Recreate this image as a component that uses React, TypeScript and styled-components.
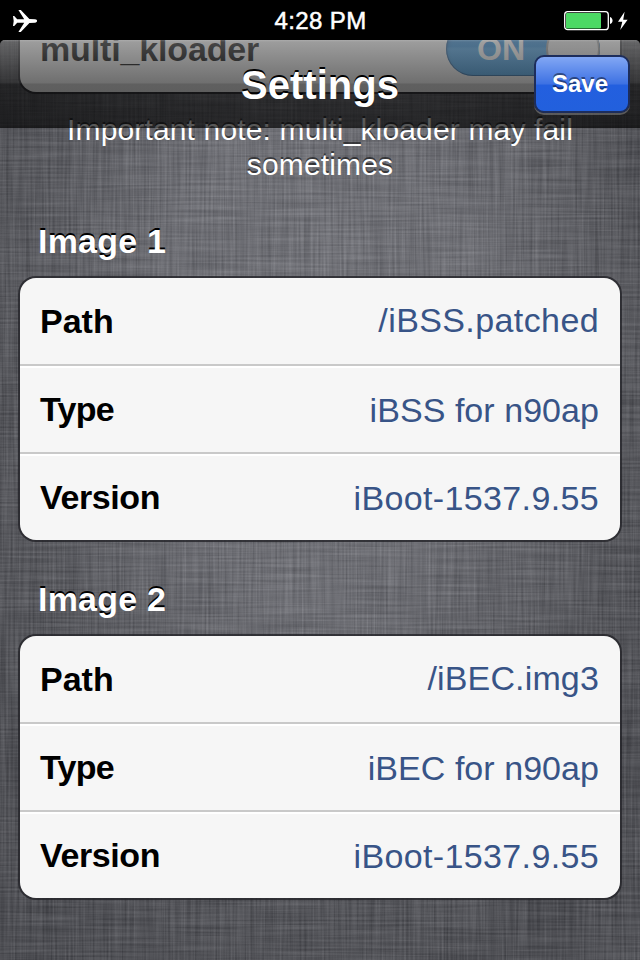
import React from "react";
import styled, { createGlobalStyle } from "styled-components";

const GlobalStyle = createGlobalStyle`
  * { box-sizing: border-box; }
  body {
    margin: 0;
    background: #000;
    font-family: "Liberation Sans", Arial, sans-serif;
  }
`;

const Screen = styled.main`
  width: 640px;
  height: 960px;
  overflow: hidden;
  background: #000;
  display: flex;
  flex-direction: column;
`;

const StatusBar = styled.header`
  height: 40px;
  flex: none;
  display: grid;
  grid-template-columns: 1fr auto 1fr;
  align-items: center;
  padding: 1px 11px 0 12px;
  color: #fff;
`;

const Clock = styled.time`
  font-size: 24px;
  line-height: 28px;
  letter-spacing: 0.4px;
  -webkit-text-stroke: 0.5px #fff;
`;

const StatusRight = styled.div`
  display: flex;
  align-items: center;
  justify-content: flex-end;
`;

const Viewport = styled.div`
  position: relative;
  flex: 1;
  overflow: hidden;
  border-radius: 5px 5px 0 0;
  background:
    radial-gradient(ellipse 400px 680px at 50% 32%, #74757b 0%, #6d6e74 40%, #515257 80%, #494a4f 100%);
`;

const Linen = styled.svg`
  position: absolute;
  inset: 0;
  width: 100%;
  height: 100%;
`;

const NavBar = styled.nav`
  position: absolute;
  inset: 0 0 auto 0;
  height: 88px;
  display: grid;
  grid-template-columns: 1fr auto 1fr;
  align-items: center;
  padding: 0 10px;
  background: linear-gradient(
    rgba(140, 140, 140, 0.7) 0,
    rgba(108, 108, 108, 0.65) 2px,
    rgba(32, 32, 32, 0.63) 43px,
    rgba(8, 8, 8, 0.63) 44px,
    rgba(0, 0, 0, 0.65) 85px,
    rgba(0, 0, 0, 0.7) 88px
  );
`;

const Title = styled.h1`
  grid-column: 2;
  margin: 2px 0 0;
  font-size: 40px;
  line-height: 46px;
  color: #fff;
  text-shadow: 0 -2px 0 #000;
`;

const SaveButton = styled.button`
  justify-self: end;
  width: 96px;
  height: 58px;
  margin-bottom: 1px;
  padding: 0 4px 0 0;
  border: 2px solid #1d2d5b;
  border-radius: 10px;
  background: linear-gradient(#82a7f4 0, #3d71e3 50%, #235fdf 52%, #2260dd 100%);
  box-shadow: 0 2px 0 rgba(255, 255, 255, 0.25);
  color: #fff;
  font: bold 24px/28px "Liberation Sans", Arial, sans-serif;
  text-align: center;
  text-shadow: 0 -2px 0 rgba(0, 0, 0, 0.45);
`;

const Content = styled.div`
  position: relative;
  padding: 0 20px;
  margin-top: -34px;
`;

const Card = styled.section`
  border-radius: 16px;
  background: #f6f6f6;
  box-shadow: 0 0 0 2px rgba(35, 35, 40, 0.78);
  overflow: hidden;
`;

const Row = styled.div`
  height: 88px;
  display: flex;
  align-items: center;
  justify-content: space-between;
  padding: 0 20px;
  border-bottom: 2px solid #c9c9c9;

  & + & { border-top: 2px solid #fff; padding-bottom: 2px; }
  &:last-child { border-bottom: 0; height: 86px; }
`;

const Label = styled.span<{ $tracking: number }>`
  font-weight: bold;
  font-size: 34px;
  line-height: 40px;
  color: #000;
  letter-spacing: ${(p) => p.$tracking}px;
`;

const Value = styled.span<{ $drop: number; $tracking: number }>`
  font-size: 34px;
  line-height: 40px;
  color: #385487;
  letter-spacing: ${(p) => p.$tracking}px;
  margin-top: ${(p) => p.$drop}px;
  margin-right: 1px;
`;

const ToggleTrack = styled.span`
  width: 154px;
  height: 54px;
  display: flex;
  align-items: center;
  justify-content: space-between;
  padding-left: 31px;
  border-radius: 27px;
  overflow: hidden;
  background: linear-gradient(#0f67b4 0, #2083d3 45%, #3c9be4 50%, #4ba6ea 100%);
  box-shadow: inset 0 0 0 1px rgba(20, 60, 110, 0.55), inset 0 3px 4px rgba(0, 30, 80, 0.5);
  color: #fff;
  font-weight: bold;
  font-size: 32px;
  line-height: 36px;
`;

const Knob = styled.span`
  width: 54px;
  height: 54px;
  border-radius: 50%;
  background: linear-gradient(#d0d0d0, #fafafa);
  border: 2px solid #999;
`;

const Note = styled.p`
  margin: 0;
  padding-top: 20px;
  height: 131px;
  text-align: center;
  font-size: 30px;
  line-height: 35px;
  letter-spacing: 0.15px;
  color: #fff;
  text-shadow: 0 -2px 0 rgba(0, 0, 0, 0.5);
`;

const Heading = styled.h2<{ $height: number }>`
  margin: 0;
  height: ${(p) => p.$height}px;
  display: flex;
  align-items: flex-end;
  padding: 0 0 17px 18px;
  font-size: 34px;
  line-height: 40px;
  letter-spacing: 0.2px;
  color: #fff;
  text-shadow: 0 -2px 0 #000;
`;

const Airplane = () => (
  <svg width="26" height="24" viewBox="0 0 26 24" fill="#fff">
    <path d="M1 7h1.2l3 3.2h7L6.4 1h2.4l8.6 9.1 5.6.2c2.8.2 2.8 3.2 0 3.4l-5.6.2L8.8 23H6.4l5.8-9.2h-7l-3 3.2H1l.7-5z" />
  </svg>
);

const Battery = () => (
  <svg width="65" height="24" viewBox="0 0 65 24">
    <rect x="0.7" y="2.7" width="43.6" height="18" rx="3" fill="none" stroke="#fff" strokeWidth="1.3" />
    <rect x="2" y="4" width="35" height="15.4" rx="1" fill="#4cd964" />
    <path d="M46 8c3.4 1.1 3.4 6 0 7z" fill="#fff" />
    <path d="M60.6 2.7L54 12.8h4.3L56.2 21l7.4-10.3h-4.4z" fill="#fff" />
  </svg>
);

type Entry = { label: string; value: string; drop?: number; tracking?: number; labelTracking?: number };

const groups: { title: string; height: number; rows: Entry[] }[] = [
  {
    title: "Image 1",
    height: 55,
    rows: [
      { label: "Path", value: "/iBSS.patched", drop: -2, tracking: 0.4 },
      { label: "Type", value: "iBSS for n90ap", drop: 2, tracking: 0.05, labelTracking: -0.7 },
      { label: "Version", value: "iBoot-1537.9.55", drop: 2, tracking: 0.36, labelTracking: -0.4 },
    ],
  },
  {
    title: "Image 2",
    height: 96,
    rows: [
      { label: "Path", value: "/iBEC.img3", drop: -2, tracking: 0.15 },
      { label: "Type", value: "iBEC for n90ap", drop: 2, tracking: 0.05, labelTracking: -0.7 },
      { label: "Version", value: "iBoot-1537.9.55", drop: 2, tracking: 0.36, labelTracking: -0.4 },
    ],
  },
];

const Texture = () => (
  <Linen aria-hidden="true">
    <filter id="weft" x="0" y="0" width="100%" height="100%" colorInterpolationFilters="sRGB">
      <feTurbulence type="fractalNoise" baseFrequency="0.012 0.45" numOctaves="2" seed="4" />
      <feColorMatrix values="1.4 0 0 0 -0.27  1.4 0 0 0 -0.27  1.4 0 0 0 -0.25  0 0 0 0 0.11" />
    </filter>
    <filter id="warp" x="0" y="0" width="100%" height="100%" colorInterpolationFilters="sRGB">
      <feTurbulence type="fractalNoise" baseFrequency="0.45 0.012" numOctaves="2" seed="9" />
      <feColorMatrix values="1.4 0 0 0 -0.27  1.4 0 0 0 -0.27  1.4 0 0 0 -0.25  0 0 0 0 0.11" />
    </filter>
    <rect width="100%" height="100%" filter="url(#weft)" />
    <rect width="100%" height="100%" filter="url(#warp)" />
  </Linen>
);

export default function App() {
  return (
    <Screen>
      <GlobalStyle />
      <StatusBar>
        <Airplane />
        <Clock>4:28 PM</Clock>
        <StatusRight><Battery /></StatusRight>
      </StatusBar>
      <Viewport>
        <Texture />
        <Content>
          <Card>
            <Row>
              <Label $tracking={-0.15}>multi_kloader</Label>
              <ToggleTrack>ON<Knob /></ToggleTrack>
            </Row>
          </Card>
          <Note>Important note: multi_kloader may fail<br />sometimes</Note>
          {groups.map((group) => (
            <React.Fragment key={group.title}>
              <Heading $height={group.height}>{group.title}</Heading>
              <Card>
                {group.rows.map((row) => (
                  <Row key={row.label}>
                    <Label $tracking={row.labelTracking ?? 0}>{row.label}</Label>
                    <Value $drop={row.drop ?? 0} $tracking={row.tracking ?? 0}>{row.value}</Value>
                  </Row>
                ))}
              </Card>
            </React.Fragment>
          ))}
        </Content>
        <NavBar>
          <Title>Settings</Title>
          <SaveButton>Save</SaveButton>
        </NavBar>
      </Viewport>
    </Screen>
  );
}
